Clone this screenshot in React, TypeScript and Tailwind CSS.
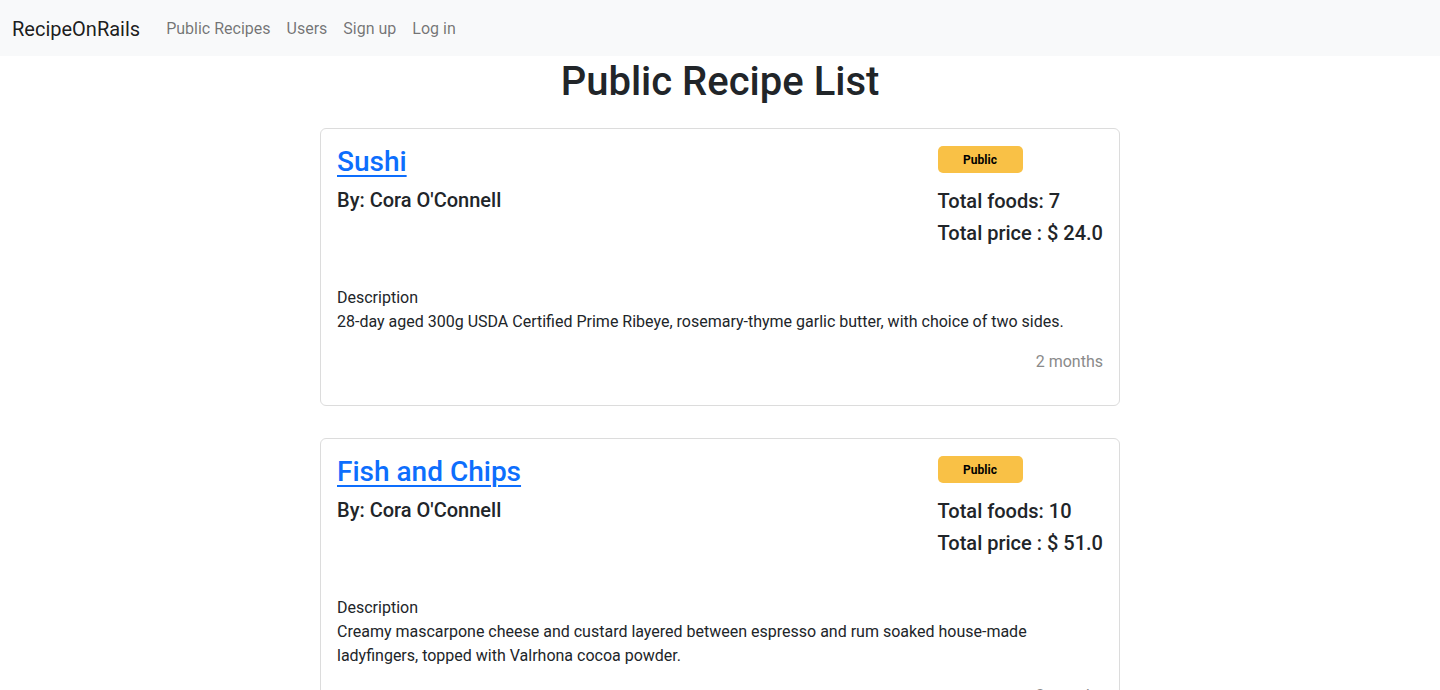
const recipes = [
  {
    name: 'Sushi',
    author: "Cora O'Connell",
    foods: 7,
    price: '24.0',
    description:
      '28-day aged 300g USDA Certified Prime Ribeye, rosemary-thyme garlic butter, with choice of two sides.',
    age: '2 months',
  },
  {
    name: 'Fish and Chips',
    author: "Cora O'Connell",
    foods: 10,
    price: '51.0',
    description:
      'Creamy mascarpone cheese and custard layered between espresso and rum soaked house-made ladyfingers, topped with Valrhona cocoa powder.',
    age: '2 months',
  },
];

const RecipeCard = ({ recipe }: { recipe: (typeof recipes)[number] }) => (
  <div className="border border-[#dcdcdc] rounded-md px-4 pt-4 pb-[31px] mb-8">
    <div className="flex justify-between">
      <div>
        <a href="#" className="block text-[28px] leading-[34px] font-medium text-[#0d6efd] underline underline-offset-[4px] decoration-[2px]">
          {recipe.name}
        </a>
        <h5 className="text-[20px] leading-[24px] font-medium mt-[9px]">By: {recipe.author}</h5>
      </div>
      <div className="flex flex-col items-start">
        <span className="mt-[1px] w-[85px] h-[27px] flex items-center justify-center rounded-[5px] bg-[#f9c146] text-[12px] font-bold text-black">
          Public
        </span>
        <p className="text-[20px] leading-[24px] font-medium mt-[16px]">Total foods: {recipe.foods}</p>
        <p className="text-[20px] leading-[24px] font-medium mt-[8px]">Total price : $ {recipe.price}</p>
      </div>
    </div>
    <div className="mt-[41px] text-[16px] leading-[24px]">
      <p>Description</p>
      <p>{recipe.description}</p>
    </div>
    <p className="text-right text-[#8a8a8a] text-[16px] leading-[24px] mt-[16px]">{recipe.age}</p>
  </div>
);

export default function App() {
  return (
    <div className="min-h-screen bg-white text-[#212529] font-['Roboto',sans-serif]">
      <nav className="h-14 bg-[#f8f9fa] flex items-center px-3 pt-[2px]">
        <a href="#" className="text-[20px] text-black/90 mr-[18px]">RecipeOnRails</a>
        <ul className="flex">
          {['Public Recipes', 'Users', 'Sign up', 'Log in'].map((l) => (
            <li key={l}>
              <a href="#" className="block px-2 text-[16px] text-black/55">{l}</a>
            </li>
          ))}
        </ul>
      </nav>
      <h1 className="text-center text-[40px] leading-[48px] font-medium mt-[2px] mb-[22px]">Public Recipe List</h1>
      <div className="w-[800px] mx-auto">
        {recipes.map((r) => (
          <RecipeCard key={r.name} recipe={r} />
        ))}
      </div>
    </div>
  );
}
